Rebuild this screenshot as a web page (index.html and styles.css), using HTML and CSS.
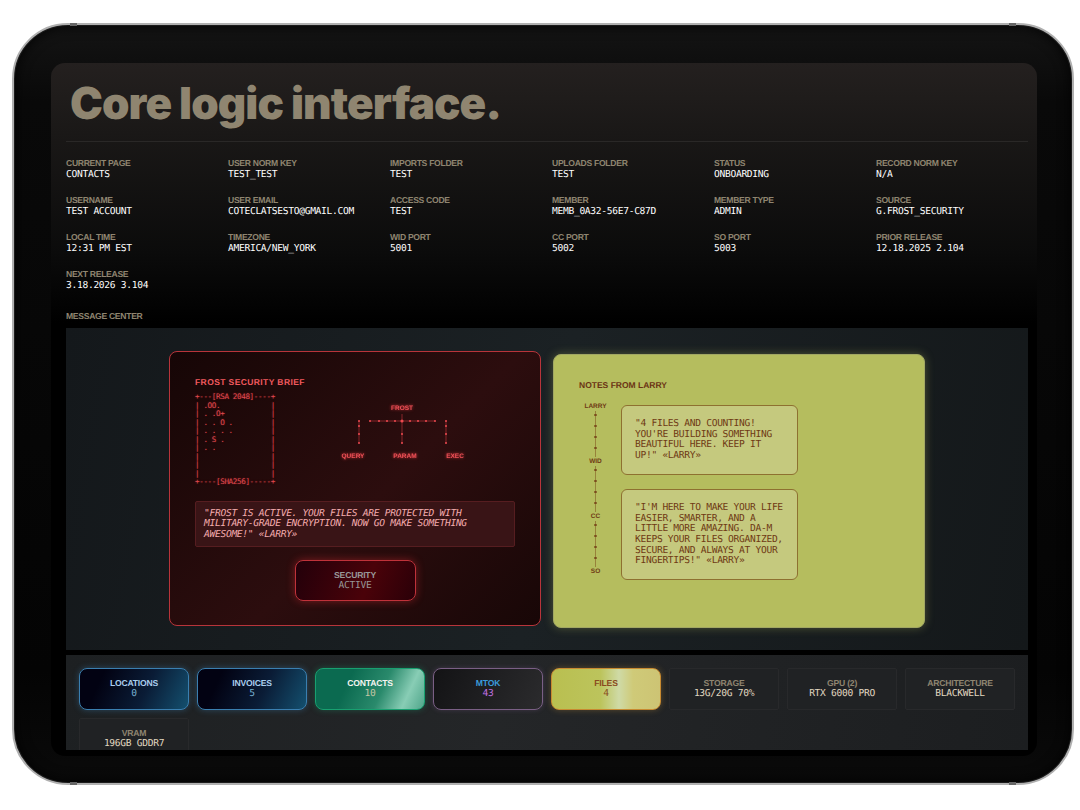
FILE: index.html
```html
<!DOCTYPE html>
<html lang="en">
<head>
   <title>Core logic interface</title>
   <link rel="stylesheet" href="styles.css">
</head>
<body>
   <div class="device">
      <span class="notch notch-tl"></span>
      <span class="notch notch-tr"></span>
      <span class="notch notch-bl"></span>
      <span class="notch notch-br"></span>
      <div class="screen">
         <h1 class="title">Core logic interface.</h1>
         <div class="meta-grid">
            <div><div class="label">CURRENT PAGE</div><div class="value">CONTACTS</div></div>
            <div><div class="label">USER NORM KEY</div><div class="value">TEST_TEST</div></div>
            <div><div class="label">IMPORTS FOLDER</div><div class="value">TEST</div></div>
            <div><div class="label">UPLOADS FOLDER</div><div class="value">TEST</div></div>
            <div><div class="label">STATUS</div><div class="value">ONBOARDING</div></div>
            <div><div class="label">RECORD NORM KEY</div><div class="value">N/A</div></div>
            <div><div class="label">USERNAME</div><div class="value">TEST ACCOUNT</div></div>
            <div><div class="label">USER EMAIL</div><div class="value">COTECLATSESTO@GMAIL.COM</div></div>
            <div><div class="label">ACCESS CODE</div><div class="value">TEST</div></div>
            <div><div class="label">MEMBER</div><div class="value">MEMB_0A32-56E7-C87D</div></div>
            <div><div class="label">MEMBER TYPE</div><div class="value">ADMIN</div></div>
            <div><div class="label">SOURCE</div><div class="value">G.FROST_SECURITY</div></div>
            <div><div class="label">LOCAL TIME</div><div class="value">12:31 PM EST</div></div>
            <div><div class="label">TIMEZONE</div><div class="value">AMERICA/NEW_YORK</div></div>
            <div><div class="label">WID PORT</div><div class="value">5001</div></div>
            <div><div class="label">CC PORT</div><div class="value">5002</div></div>
            <div><div class="label">SO PORT</div><div class="value">5003</div></div>
            <div><div class="label">PRIOR RELEASE</div><div class="value">12.18.2025 2.104</div></div>
            <div><div class="label">NEXT RELEASE</div><div class="value">3.18.2026 3.104</div></div>
         </div>
         <div class="label section-label">MESSAGE CENTER</div>
         <div class="messages">
            <div class="card card-red">
               <div class="card-title">FROST SECURITY BRIEF</div>
               <div class="art-row">
<pre class="ascii">+---[RSA 2048]----+
| .OO.            |
| . .O+           |
| . . O .         |
| . . . .         |
| . S .           |
| . .             |
|                 |
|                 |
|                 |
+----[SHA256]-----+</pre>
                  <svg class="tree" width="130" height="62" viewBox="0 0 130 62">
                     <g stroke="#c9383e" stroke-width="0.6">
                        <path d="M30 21H95M62 14V43M19 21V43M106 21V43"/>
                     </g>
                     <g fill="#ee4a50">
                        <circle cx="30" cy="21" r="1"/><circle cx="39" cy="21" r="1"/><circle cx="47" cy="21" r="1"/><circle cx="55" cy="21" r="1"/>
                        <circle cx="62" cy="21" r="1.6"/><circle cx="70" cy="21" r="1"/><circle cx="78" cy="21" r="1"/><circle cx="86" cy="21" r="1"/><circle cx="95" cy="21" r="1"/>
                        <circle cx="19" cy="21" r="1"/><circle cx="19" cy="26" r="1"/><circle cx="19" cy="34" r="1"/><circle cx="19" cy="43" r="1"/>
                        <circle cx="62" cy="34" r="1"/><circle cx="62" cy="43" r="1"/>
                        <circle cx="106" cy="21" r="1"/><circle cx="106" cy="26" r="1"/><circle cx="106" cy="34" r="1"/><circle cx="106" cy="43" r="1"/>
                     </g>
                     <text class="tree-text" x="62" y="9.5">FROST</text>
                     <text class="tree-text" x="13" y="57.5">QUERY</text>
                     <text class="tree-text" x="65" y="57.5">PARAM</text>
                     <text class="tree-text" x="115" y="57.5">EXEC</text>
                  </svg>
               </div>
               <div class="quote">"FROST IS ACTIVE. YOUR FILES ARE PROTECTED WITH MILITARY-GRADE ENCRYPTION. NOW GO MAKE SOMETHING AWESOME!" «LARRY»</div>
               <div class="security-btn">
                  <div class="security-label">SECURITY</div>
                  <div class="security-value">ACTIVE</div>
               </div>
            </div>
            <div class="card card-green">
               <div class="card-title">NOTES FROM LARRY</div>
               <div class="notes-row">
                  <div class="timeline">
                     <span>LARRY</span><i></i><span>WID</span><i></i><span>CC</span><i></i><span>SO</span>
                  </div>
                  <div class="bubbles">
                     <div class="bubble">"4 FILES AND COUNTING! YOU'RE BUILDING SOMETHING BEAUTIFUL HERE. KEEP IT UP!" «LARRY»</div>
                     <div class="bubble">"I'M HERE TO MAKE YOUR LIFE EASIER, SMARTER, AND A LITTLE MORE AMAZING. DA-M KEEPS YOUR FILES ORGANIZED, SECURE, AND ALWAYS AT YOUR FINGERTIPS!" «LARRY»</div>
                  </div>
               </div>
            </div>
         </div>
         <div class="tile-bar">
            <div class="tile tile-blue"><div class="tile-label">LOCATIONS</div><div class="tile-value">0</div></div>
            <div class="tile tile-blue"><div class="tile-label">INVOICES</div><div class="tile-value">5</div></div>
            <div class="tile tile-green"><div class="tile-label">CONTACTS</div><div class="tile-value">10</div></div>
            <div class="tile tile-mtok"><div class="tile-label">MTOK</div><div class="tile-value">43</div></div>
            <div class="tile tile-files"><div class="tile-label">FILES</div><div class="tile-value">4</div></div>
            <div class="tile tile-info"><div class="tile-label">STORAGE</div><div class="tile-value">13G/20G 70%</div></div>
            <div class="tile tile-info"><div class="tile-label">GPU (2)</div><div class="tile-value">RTX 6000 PRO</div></div>
            <div class="tile tile-info"><div class="tile-label">ARCHITECTURE</div><div class="tile-value">BLACKWELL</div></div>
            <div class="tile tile-info"><div class="tile-label">VRAM</div><div class="tile-value">196GB GDDR7</div></div>
         </div>
      </div>
   </div>
</body>
</html>
```

FILE: styles.css
```css
* {
    margin: 0;
    padding: 0;
    box-sizing: border-box;
}
html, body {
    height: 810px;
    overflow: hidden;
}
body {
    background: #fff;
    font-family: "Liberation Sans", Arial, sans-serif;
    text-rendering: geometricPrecision;
}
.device {
    position: relative;
    width: 1062px;
    height: 762px;
    margin: 23px 0 0 12px;
    padding: 38px 35px 0 37px;
    background: linear-gradient(#141414, #090909 10%, #040404 85%, #0a0a0a);
    border: 2px solid #b0b0b0;
    border-radius: 56px;
    box-shadow: inset 0 0 0 1px #1c1c1c, inset 0 0 14px #000;
}
.notch {
    position: absolute;
    width: 7px;
    height: 3px;
    background: #666;
}
.notch-tl { left: 56px; top: -2px; }
.notch-tr { right: 56px; top: -2px; }
.notch-bl { left: 56px; bottom: -2px; }
.notch-br { right: 56px; bottom: -2px; }
.screen {
    height: 693px;
    padding: 0 9px 0 15px;
    background: linear-gradient(#24201f 0, #1a1817 70px, #0b0b0b 190px, #000 260px);
    border-radius: 14px;
    overflow: hidden;
}
.title {
    height: 79px;
    padding: 15px 0 0 4px;
    border-bottom: 1px solid #2a2827;
    color: #8f8570;
    font-family: Inter, sans-serif;
    font-size: 44px;
    font-weight: 900;
    line-height: 50px;
    letter-spacing: -0.9px;
}
.meta-grid {
    display: grid;
    grid-template-columns: repeat(6, 162px);
    row-gap: 15px;
    margin-top: 16px;
}
.label {
    color: #8f8570;
    font-size: 8.6px;
    font-weight: bold;
    line-height: 11px;
    letter-spacing: -0.3px;
}
.value {
    color: #fff;
    font-family: "DejaVu Sans Mono", monospace;
    font-size: 9.6px;
    line-height: 11px;
    letter-spacing: -0.3px;
}
.section-label {
    margin-top: 20px;
}
.messages {
    display: flex;
    justify-content: center;
    align-items: flex-start;
    gap: 12px;
    height: 322px;
    margin-top: 6px;
    padding-top: 23px;
    background: linear-gradient(100deg, #14181b, #1b2124 50%, #14181a);
}
.card {
    width: 372px;
    border-radius: 8px;
}
.card-title {
    font-size: 8.5px;
    font-weight: bold;
    line-height: 10px;
    letter-spacing: 0.4px;
}
.card-red {
    height: 275px;
    padding: 25px 25px 0;
    background: linear-gradient(135deg, #160606, #2c0d0e 55%, #180707);
    border: 1px solid #b8343a;
}
.card-red .card-title {
    color: #f25a5f;
}
.art-row {
    display: flex;
    margin-top: 6px;
}
.ascii {
    width: 80px;
    color: #e04a50;
    font-family: "DejaVu Sans Mono", monospace;
    font-size: 7.6px;
    line-height: 8.5px;
    letter-spacing: -0.37px;
    text-shadow: 0 0 2px rgba(220, 50, 55, 0.5);
}
.tree {
    margin: 7px 0 0 65px;
}
.tree-text {
    fill: #ee5258;
    font-size: 6.5px;
    font-weight: bold;
    text-anchor: middle;
    filter: drop-shadow(0 0 1.5px #d8343a);
}
.quote {
    height: 46px;
    margin-top: 14px;
    padding: 7px 8px 0;
    background: #391416;
    border: 1px solid #561d20;
    border-radius: 2px;
    color: #f5acae;
    font-family: "DejaVu Sans Mono", monospace;
    font-size: 9.6px;
    font-style: italic;
    line-height: 10.7px;
    letter-spacing: -0.3px;
}
.security-btn {
    width: 121px;
    height: 41px;
    margin: 13px auto 0;
    padding-top: 9px;
    background: linear-gradient(110deg, #23000a, #4a0209 60%, #2a0008);
    border: 1px solid #c0323a;
    border-radius: 8px;
    box-shadow: 0 0 8px rgba(225, 45, 50, 0.45);
    text-align: center;
}
.security-label {
    color: #999;
    font-size: 8.6px;
    font-weight: bold;
    line-height: 11px;
    letter-spacing: -0.2px;
}
.security-value {
    color: #979797;
    font-family: "DejaVu Sans Mono", monospace;
    font-size: 9.6px;
    line-height: 10px;
    letter-spacing: -0.3px;
}
.card-green {
    height: 274px;
    margin-top: 3px;
    padding: 25px 25px 0;
    background: #b5bd5e;
    border: 1px solid #a1a763;
    box-shadow: 0 0 10px rgba(181, 189, 94, 0.35);
}
.card-green .card-title {
    color: #6b3414;
    letter-spacing: 0;
}
.notes-row {
    display: flex;
    margin-top: 12px;
}
.timeline {
    display: flex;
    flex-direction: column;
    align-items: center;
    width: 33px;
    height: 174px;
    margin-right: 9px;
    color: #6f3a14;
    font-size: 6.5px;
    font-weight: bold;
}
.timeline span {
    height: 9px;
    line-height: 9px;
}
.timeline i {
    flex: 1;
    width: 3px;
    background-image: radial-gradient(circle at 1.5px 4px, #7a4a1c 1px, transparent 1.4px), linear-gradient(90deg, transparent 1px, #97823a 1px, #97823a 2px, transparent 2px);
    background-size: 3px 11px, 3px 100%;
}
.bubbles {
    width: 177px;
    margin-top: 3px;
}
.bubble {
    margin-bottom: 14px;
    padding: 13px 13px 12px;
    background: #c5c97e;
    border: 1px solid #8e7030;
    border-radius: 6px;
    color: #6f3a14;
    font-family: "DejaVu Sans Mono", monospace;
    font-size: 9.6px;
    line-height: 10.7px;
    letter-spacing: -0.3px;
}
.tile-bar {
    display: grid;
    grid-template-columns: repeat(8, 1fr);
    gap: 8px;
    height: 95px;
    margin-top: 5px;
    padding: 13px;
    background: linear-gradient(100deg, #1d2022, #242628 45%, #1c1e20);
    overflow: hidden;
}
.tile {
    height: 42px;
    padding-top: 9px;
    border: 1px solid;
    border-radius: 8px;
    text-align: center;
}
.tile-label {
    font-size: 8.6px;
    font-weight: bold;
    line-height: 11px;
    letter-spacing: -0.2px;
}
.tile-value {
    font-family: "DejaVu Sans Mono", monospace;
    font-size: 9.6px;
    line-height: 10px;
    letter-spacing: -0.3px;
}
.tile-blue {
    background: linear-gradient(115deg, #020212 20%, #0a1c36 60%, #14506f);
    border-color: #3a7fb0;
    box-shadow: 0 0 6px rgba(70, 150, 210, 0.35);
}
.tile-blue .tile-label { color: #a9cdee; }
.tile-blue .tile-value { color: #78b0d2; }
.tile-green {
    background: linear-gradient(115deg, #0b6a50 30%, #2a8a6c 60%, #88cdb5 82%, #4fa58a);
    border-color: #18a070;
    box-shadow: 0 0 6px rgba(30, 170, 120, 0.35);
}
.tile-green .tile-label { color: #f4f4f0; }
.tile-green .tile-value { color: #c6c6a4; }
.tile-mtok {
    background: linear-gradient(115deg, #131315, #2b2b2d);
    border-color: #7a5f85;
    box-shadow: 0 0 5px rgba(150, 110, 170, 0.25);
}
.tile-mtok .tile-label { color: #3a9ad9; }
.tile-mtok .tile-value { color: #c070e0; }
.tile-files {
    background: linear-gradient(90deg, #b9bf50, #bcc45c 45%, #cfdaa6 62%, #cfca78 75%, #cdc474);
    border-color: #c88a30;
    box-shadow: 0 0 6px rgba(200, 150, 60, 0.35);
}
.tile-files .tile-label { color: #8a4a20; }
.tile-files .tile-value { color: #8a5020; }
.tile-info {
    background: #202224;
    border-color: #28292b;
    border-radius: 2px;
}
.tile-info .tile-label { color: #8f8570; }
.tile-info .tile-value { color: #e0d8c0; }
```
